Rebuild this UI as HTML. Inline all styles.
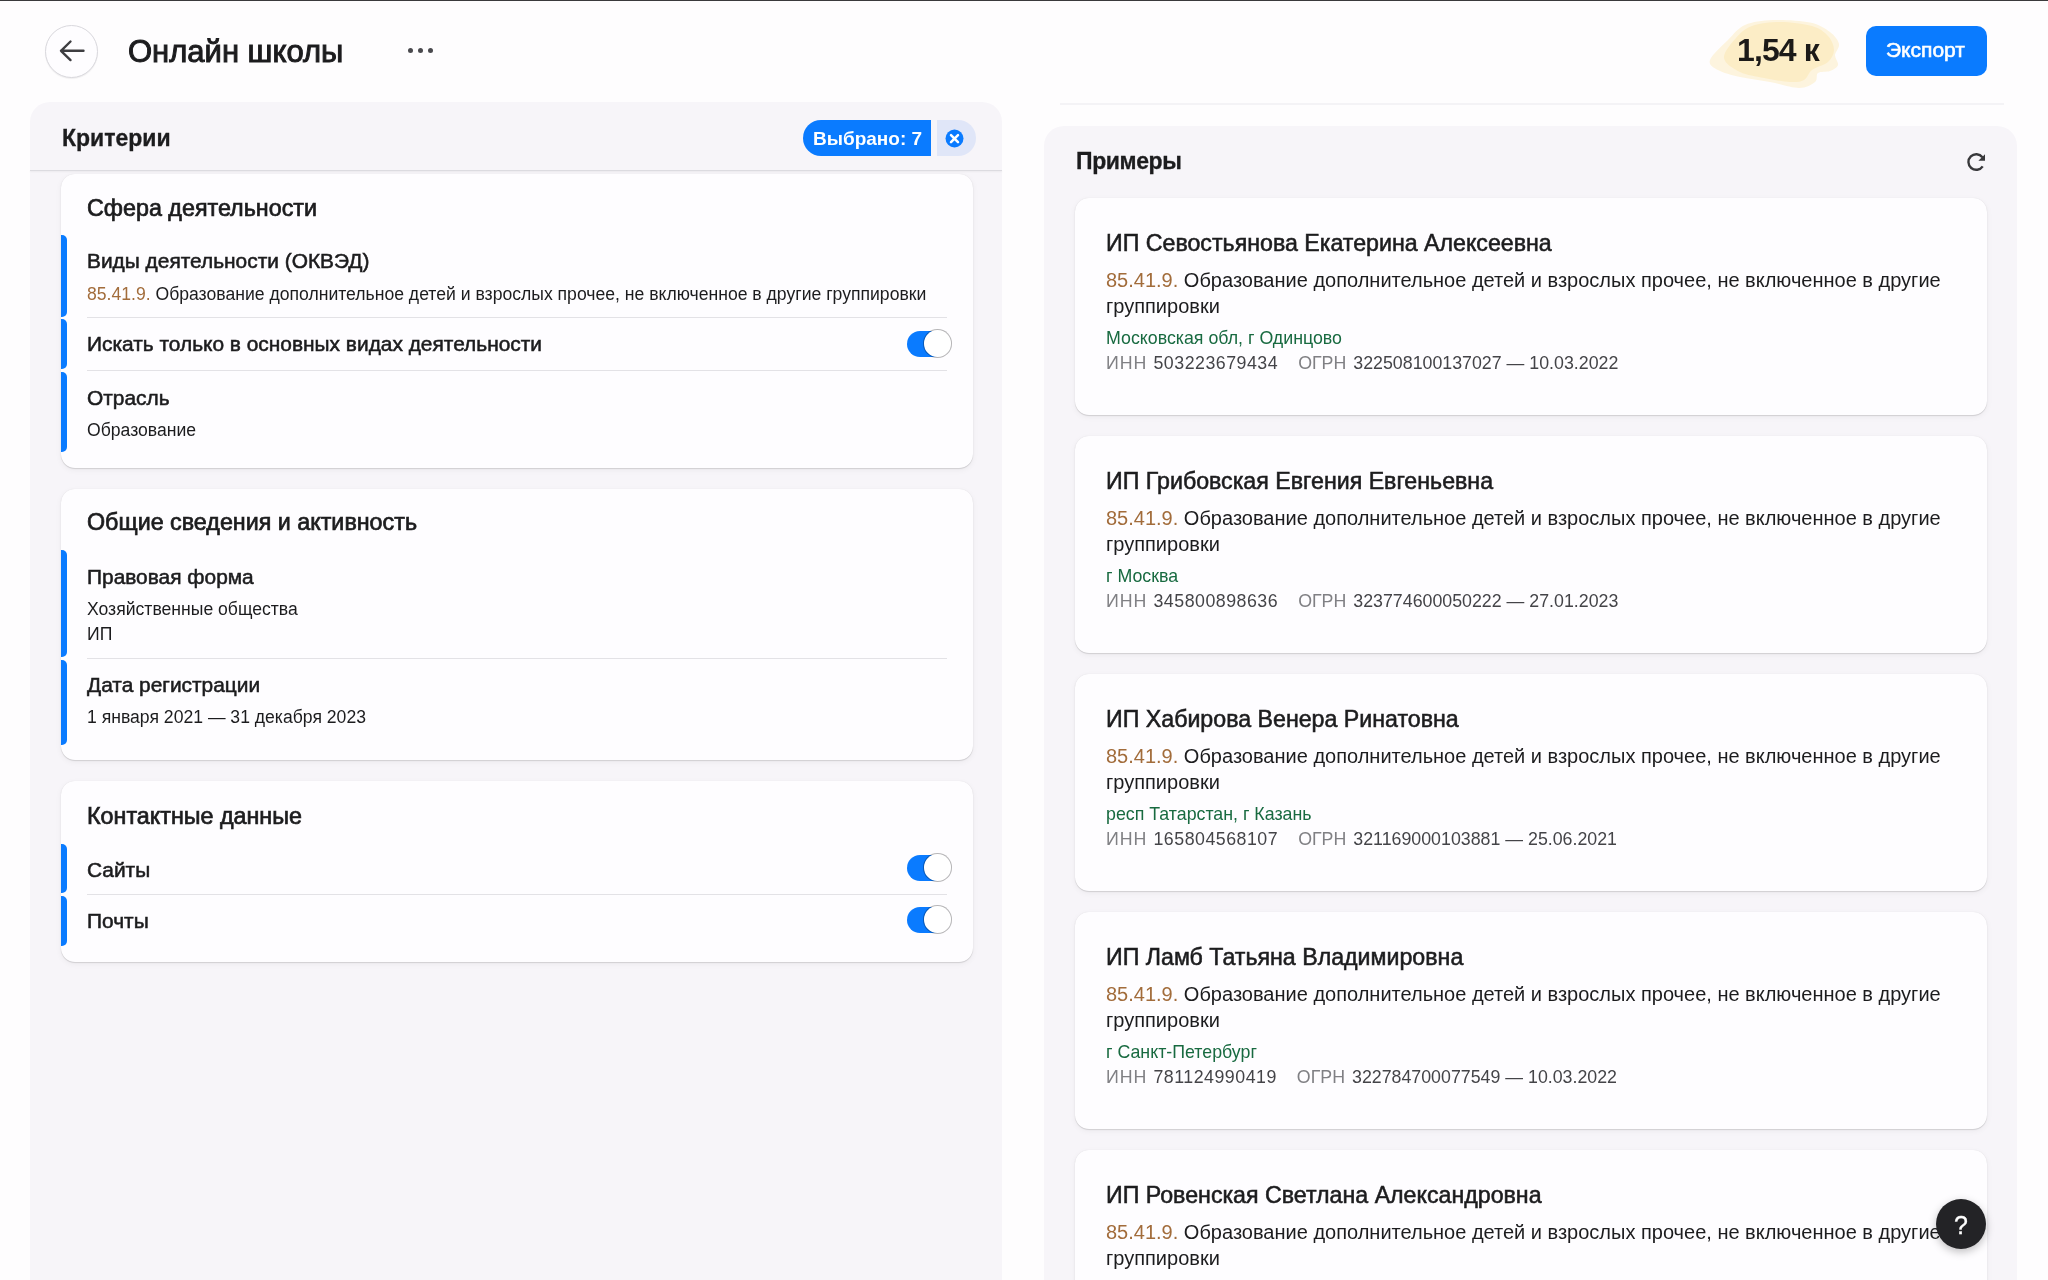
<!DOCTYPE html><html><head><meta charset='utf-8'><style>
*{margin:0;padding:0;box-sizing:border-box}
html,body{width:2048px;height:1280px;overflow:hidden;background:#fefdfe;font-family:"Liberation Sans",sans-serif}
.t{position:absolute;white-space:nowrap;will-change:transform}
.abs{position:absolute}
.panel{position:absolute;background:#f7f5f9}
.card{position:absolute;background:#fefdff;border-radius:14px;box-shadow:0 1px 1px rgba(0,0,0,0.12),0 2px 6px rgba(0,0,0,0.05),0 0 1px rgba(0,0,0,0.10)}
.bar{position:absolute;left:0;width:6px;background:#0a7bff;border-radius:0 5px 5px 0}
.sep{position:absolute;height:1px;background:#e3e2e6}
.tog{position:absolute;width:40px;height:26px;border-radius:13px;background:#0a7bff}
.tog:after{content:"";position:absolute;left:17px;top:-0.7px;width:26.6px;height:26.6px;border-radius:50%;background:#fff;box-shadow:0 0 0 1px rgba(0,0,0,0.28)}
</style></head><body>
<div class="abs" style="left:0;top:0;width:2048px;height:1px;background:#3a3a3c"></div>
<div class="abs" style="left:45px;top:25px;width:53px;height:53px;border-radius:50%;border:1px solid #d9d8dd;background:#fefdff;box-shadow:0 1px 1px rgba(0,0,0,0.06)"></div>
<svg class="abs" style="left:45px;top:25px" width="53" height="53" viewBox="0 0 53 53"><path d="M38.5 25.8H16M25.5 16.5L16 25.8L25.5 35.1" fill="none" stroke="#3e3e41" stroke-width="2.4" stroke-linecap="round" stroke-linejoin="round"/></svg>
<div class="t" style="left:128px;top:32.06px;font-size:31px;line-height:40px;color:#1c1c1e;-webkit-text-stroke:1.0px #1c1c1e;">Онлайн школы</div>
<div class="abs" style="left:407.5px;top:48px;width:5px;height:5px;border-radius:50%;background:#4a4a4e"></div>
<div class="abs" style="left:417.5px;top:48px;width:5px;height:5px;border-radius:50%;background:#4a4a4e"></div>
<div class="abs" style="left:427.5px;top:48px;width:5px;height:5px;border-radius:50%;background:#4a4a4e"></div>
<svg class="abs" style="left:1700px;top:10px" width="150" height="90" viewBox="0 0 150 90"><path d="M10.0 50.0 C11.7 45.0 22.2 35.8 28.0 30.0 C33.8 24.2 37.5 18.3 45.0 15.0 C52.5 11.7 62.2 10.4 73.0 10.0 C83.8 9.6 100.5 10.5 110.0 12.5 C119.5 14.5 125.2 18.4 130.0 22.0 C134.8 25.6 138.2 30.2 139.0 34.0 C139.8 37.8 135.2 41.5 135.0 45.0 C134.8 48.5 138.8 52.3 138.0 55.0 C137.2 57.7 133.3 59.7 130.0 61.0 C126.7 62.3 120.5 61.2 118.0 63.0 C115.5 64.8 118.2 69.5 115.0 72.0 C111.8 74.5 106.5 78.0 99.0 78.0 C91.5 78.0 79.8 73.8 70.0 72.0 C60.2 70.2 48.7 69.0 40.0 67.0 C31.3 65.0 23.0 62.8 18.0 60.0 C13.0 57.2 8.3 55.0 10.0 50.0Z" fill="#fdf4de"/><path d="M24.0 48.0 C23.3 42.3 31.3 33.3 36.0 28.0 C40.7 22.7 44.7 18.7 52.0 16.0 C59.3 13.3 70.0 12.0 80.0 12.0 C90.0 12.0 104.0 13.7 112.0 16.0 C120.0 18.3 124.3 22.0 128.0 26.0 C131.7 30.0 134.0 35.7 134.0 40.0 C134.0 44.3 131.7 48.7 128.0 52.0 C124.3 55.3 116.0 57.0 112.0 60.0 C108.0 63.0 107.7 68.0 104.0 70.0 C100.3 72.0 96.7 72.3 90.0 72.0 C83.3 71.7 72.3 69.7 64.0 68.0 C55.7 66.3 46.7 65.3 40.0 62.0 C33.3 58.7 24.7 53.7 24.0 48.0Z" fill="#fcedc6"/></svg>
<div class="t" style="left:1737px;top:28.91px;font-size:32px;line-height:42px;color:#1c1a18;font-weight:700;letter-spacing:-0.9px;">1,54 к</div>
<div class="abs" style="left:1866px;top:26px;width:121px;height:50px;border-radius:10px;background:#0a7bff"></div>
<div class="t" style="left:1886px;top:36.42px;font-size:21px;line-height:27px;color:#ffffff;-webkit-text-stroke:0.6px #ffffff;">Экспорт</div>
<div class="abs" style="left:1060px;top:103px;width:944px;height:2px;background:#f4f3f6"></div>
<div class="panel" style="left:30px;top:102px;width:972px;height:1300px;border-radius:20px 20px 0 0"></div>
<div class="abs" style="left:30px;top:170px;width:972px;height:1px;background:#dcdbe0;box-shadow:0 1px 2px rgba(0,0,0,0.07)"></div>
<div class="t" style="left:62px;top:123.03px;font-size:23px;line-height:30px;color:#1c1c1e;font-weight:700;-webkit-text-stroke:0.3px #1c1c1e;">Критерии</div>
<div class="abs" style="left:803px;top:120px;width:128px;height:36px;border-radius:18px 0 0 18px;background:#0a7bff"></div>
<div class="abs" style="left:937px;top:120px;width:39px;height:36px;border-radius:0 18px 18px 0;background:#e0e6f8"></div>
<svg class="abs" style="left:945px;top:129px" width="19" height="19" viewBox="0 0 19 19"><circle cx="9.5" cy="9.5" r="9" fill="#0a7bff"/><path d="M6 6.2L13 13.2M13 6.2L6 13.2" stroke="#fff" stroke-width="2.5" stroke-linecap="round"/></svg>
<div class="t" style="left:813px;top:125.92px;font-size:19px;line-height:25px;color:#ffffff;font-weight:700;">Выбрано: 7</div>
<div class="card" style="left:61px;top:174px;width:912px;height:294px"></div>
<div class="t" style="left:87px;top:192.93px;font-size:23.3px;line-height:30px;color:#1c1c1e;-webkit-text-stroke:0.7px #1c1c1e;">Сфера деятельности</div>
<div class="abs" style="left:61px;top:235px;width:6px;height:82px;background:#0a7bff;border-radius:0 5px 5px 0"></div>
<div class="t" style="left:87px;top:247.26px;font-size:20.9px;line-height:27px;color:#1c1c1e;-webkit-text-stroke:0.55px #1c1c1e;">Виды деятельности (ОКВЭД)</div>
<div class="t" style="left:87px;top:282.70px;font-size:17.6px;line-height:23px;color:#1c1c1e;"><span style="color:#a26c3b">85.41.9.</span> Образование дополнительное детей и взрослых прочее, не включенное в другие группировки</div>
<div class="sep" style="left:87px;top:317px;width:860px"></div>
<div class="abs" style="left:61px;top:319px;width:6px;height:50px;background:#0a7bff;border-radius:0 5px 5px 0"></div>
<div class="t" style="left:87px;top:330.26px;font-size:20.9px;line-height:27px;color:#1c1c1e;-webkit-text-stroke:0.55px #1c1c1e;">Искать только в основных видах деятельности</div>
<div class="tog" style="left:907px;top:331px"></div>
<div class="sep" style="left:87px;top:370px;width:860px"></div>
<div class="abs" style="left:61px;top:372px;width:6px;height:80px;background:#0a7bff;border-radius:0 5px 5px 0"></div>
<div class="t" style="left:87px;top:383.76px;font-size:20.9px;line-height:27px;color:#1c1c1e;-webkit-text-stroke:0.55px #1c1c1e;">Отрасль</div>
<div class="t" style="left:87px;top:418.70px;font-size:17.6px;line-height:23px;color:#1c1c1e;">Образование</div>
<div class="card" style="left:61px;top:489px;width:912px;height:271px"></div>
<div class="t" style="left:87px;top:507.43px;font-size:23.3px;line-height:30px;color:#1c1c1e;-webkit-text-stroke:0.7px #1c1c1e;">Общие сведения и активность</div>
<div class="abs" style="left:61px;top:550px;width:6px;height:107px;background:#0a7bff;border-radius:0 5px 5px 0"></div>
<div class="t" style="left:87px;top:562.56px;font-size:20.9px;line-height:27px;color:#1c1c1e;-webkit-text-stroke:0.55px #1c1c1e;">Правовая форма</div>
<div class="t" style="left:87px;top:597.70px;font-size:17.6px;line-height:23px;color:#1c1c1e;">Хозяйственные общества</div>
<div class="t" style="left:87px;top:623.10px;font-size:17.6px;line-height:23px;color:#1c1c1e;">ИП</div>
<div class="sep" style="left:87px;top:658px;width:860px"></div>
<div class="abs" style="left:61px;top:660px;width:6px;height:85px;background:#0a7bff;border-radius:0 5px 5px 0"></div>
<div class="t" style="left:87px;top:670.76px;font-size:20.9px;line-height:27px;color:#1c1c1e;-webkit-text-stroke:0.55px #1c1c1e;">Дата регистрации</div>
<div class="t" style="left:87px;top:706.20px;font-size:17.6px;line-height:23px;color:#1c1c1e;">1 января 2021 — 31 декабря 2023</div>
<div class="card" style="left:61px;top:781px;width:912px;height:181px"></div>
<div class="t" style="left:87px;top:800.63px;font-size:23.3px;line-height:30px;color:#1c1c1e;-webkit-text-stroke:0.7px #1c1c1e;">Контактные данные</div>
<div class="abs" style="left:61px;top:844px;width:6px;height:49px;background:#0a7bff;border-radius:0 5px 5px 0"></div>
<div class="t" style="left:87px;top:855.66px;font-size:20.9px;line-height:27px;color:#1c1c1e;-webkit-text-stroke:0.55px #1c1c1e;">Сайты</div>
<div class="tog" style="left:907px;top:855px"></div>
<div class="sep" style="left:87px;top:894px;width:860px"></div>
<div class="abs" style="left:61px;top:896px;width:6px;height:50px;background:#0a7bff;border-radius:0 5px 5px 0"></div>
<div class="t" style="left:87px;top:907.46px;font-size:20.9px;line-height:27px;color:#1c1c1e;-webkit-text-stroke:0.55px #1c1c1e;">Почты</div>
<div class="tog" style="left:907px;top:907px"></div>
<div class="panel" style="left:1044px;top:126px;width:973px;height:1300px;border-radius:20px 20px 0 0"></div>
<div class="t" style="left:1076px;top:146.03px;font-size:23px;line-height:30px;color:#1c1c1e;font-weight:700;-webkit-text-stroke:0.3px #1c1c1e;letter-spacing:-0.4px;">Примеры</div>
<svg class="abs" style="left:1964px;top:150px" width="24" height="24" viewBox="0 0 24 24"><path d="M18.72 16.36A7.8 7.8 0 1 1 18.4 7.2" fill="none" stroke="#38383b" stroke-width="2.4"/><path d="M21 4.2V10.75H14.4Z" fill="#38383b"/></svg>
<div class="card" style="left:1075px;top:198px;width:912px;height:217px"></div>
<div class="t" style="left:1106px;top:227.96px;font-size:23.2px;line-height:30px;color:#1c1c1e;-webkit-text-stroke:0.55px #1c1c1e;">ИП Севостьянова Екатерина Алексеевна</div>
<div class="t" style="left:1106px;top:267.07px;font-size:20px;line-height:26px;color:#1c1c1e;"><span style="color:#a26c3b">85.41.9.</span> Образование дополнительное детей и взрослых прочее, не включенное в другие</div>
<div class="t" style="left:1106px;top:292.57px;font-size:20px;line-height:26px;color:#1c1c1e;">группировки</div>
<div class="t" style="left:1106px;top:327.03px;font-size:17.8px;line-height:23px;color:#186a40;">Московская обл, г Одинцово</div>
<div class="t" style="left:1106px;top:351.63px;font-size:17.8px;line-height:23px;color:#444448;"><span style="color:#808084;letter-spacing:1px">ИНН</span><span style="margin-left:6px;letter-spacing:0.5px">503223679434</span><span style="margin-left:20px;color:#808084">ОГРН</span><span style="margin-left:7px">322508100137027 — 10.03.2022</span></div>
<div class="card" style="left:1075px;top:436px;width:912px;height:217px"></div>
<div class="t" style="left:1106px;top:465.96px;font-size:23.2px;line-height:30px;color:#1c1c1e;-webkit-text-stroke:0.55px #1c1c1e;">ИП Грибовская Евгения Евгеньевна</div>
<div class="t" style="left:1106px;top:505.07px;font-size:20px;line-height:26px;color:#1c1c1e;"><span style="color:#a26c3b">85.41.9.</span> Образование дополнительное детей и взрослых прочее, не включенное в другие</div>
<div class="t" style="left:1106px;top:530.57px;font-size:20px;line-height:26px;color:#1c1c1e;">группировки</div>
<div class="t" style="left:1106px;top:565.03px;font-size:17.8px;line-height:23px;color:#186a40;">г Москва</div>
<div class="t" style="left:1106px;top:589.63px;font-size:17.8px;line-height:23px;color:#444448;"><span style="color:#808084;letter-spacing:1px">ИНН</span><span style="margin-left:6px;letter-spacing:0.5px">345800898636</span><span style="margin-left:20px;color:#808084">ОГРН</span><span style="margin-left:7px">323774600050222 — 27.01.2023</span></div>
<div class="card" style="left:1075px;top:674px;width:912px;height:217px"></div>
<div class="t" style="left:1106px;top:703.96px;font-size:23.2px;line-height:30px;color:#1c1c1e;-webkit-text-stroke:0.55px #1c1c1e;">ИП Хабирова Венера Ринатовна</div>
<div class="t" style="left:1106px;top:743.07px;font-size:20px;line-height:26px;color:#1c1c1e;"><span style="color:#a26c3b">85.41.9.</span> Образование дополнительное детей и взрослых прочее, не включенное в другие</div>
<div class="t" style="left:1106px;top:768.57px;font-size:20px;line-height:26px;color:#1c1c1e;">группировки</div>
<div class="t" style="left:1106px;top:803.03px;font-size:17.8px;line-height:23px;color:#186a40;">респ Татарстан, г Казань</div>
<div class="t" style="left:1106px;top:827.63px;font-size:17.8px;line-height:23px;color:#444448;"><span style="color:#808084;letter-spacing:1px">ИНН</span><span style="margin-left:6px;letter-spacing:0.5px">165804568107</span><span style="margin-left:20px;color:#808084">ОГРН</span><span style="margin-left:7px">321169000103881 — 25.06.2021</span></div>
<div class="card" style="left:1075px;top:912px;width:912px;height:217px"></div>
<div class="t" style="left:1106px;top:941.96px;font-size:23.2px;line-height:30px;color:#1c1c1e;-webkit-text-stroke:0.55px #1c1c1e;">ИП Ламб Татьяна Владимировна</div>
<div class="t" style="left:1106px;top:981.07px;font-size:20px;line-height:26px;color:#1c1c1e;"><span style="color:#a26c3b">85.41.9.</span> Образование дополнительное детей и взрослых прочее, не включенное в другие</div>
<div class="t" style="left:1106px;top:1006.57px;font-size:20px;line-height:26px;color:#1c1c1e;">группировки</div>
<div class="t" style="left:1106px;top:1041.03px;font-size:17.8px;line-height:23px;color:#186a40;">г Санкт-Петербург</div>
<div class="t" style="left:1106px;top:1065.63px;font-size:17.8px;line-height:23px;color:#444448;"><span style="color:#808084;letter-spacing:1px">ИНН</span><span style="margin-left:6px;letter-spacing:0.5px">781124990419</span><span style="margin-left:20px;color:#808084">ОГРН</span><span style="margin-left:7px">322784700077549 — 10.03.2022</span></div>
<div class="card" style="left:1075px;top:1150px;width:912px;height:217px"></div>
<div class="t" style="left:1106px;top:1179.96px;font-size:23.2px;line-height:30px;color:#1c1c1e;-webkit-text-stroke:0.55px #1c1c1e;">ИП Ровенская Светлана Александровна</div>
<div class="t" style="left:1106px;top:1219.07px;font-size:20px;line-height:26px;color:#1c1c1e;"><span style="color:#a26c3b">85.41.9.</span> Образование дополнительное детей и взрослых прочее, не включенное в другие</div>
<div class="t" style="left:1106px;top:1244.57px;font-size:20px;line-height:26px;color:#1c1c1e;">группировки</div>
<div class="abs" style="left:1936px;top:1199px;width:50px;height:50px;border-radius:50%;background:#232326;box-shadow:0 3px 8px rgba(0,0,0,0.25)"></div>
<div class="t" style="left:1954px;top:1209.34px;font-size:25px;line-height:32px;color:#ffffff;-webkit-text-stroke:0.3px #ffffff;">?</div>
</body></html>
